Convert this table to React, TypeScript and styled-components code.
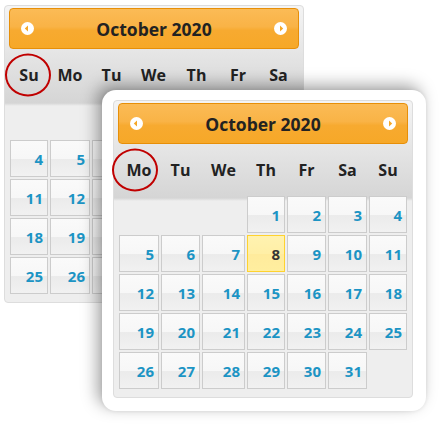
import styled, { createGlobalStyle } from "styled-components";

const GlobalStyle = createGlobalStyle`
  body {
    margin: 0;
    background: #ffffff;
    font-family: "Open Sans", "DejaVu Sans", sans-serif;
  }
`;

type Cell = number | null;

const buildWeeks = (offset: number, days: number): Cell[][] => {
  const cells: Cell[] = [];
  for (let i = 0; i < offset; i++) cells.push(null);
  for (let d = 1; d <= days; d++) cells.push(d);
  while (cells.length % 7 !== 0) cells.push(null);
  const weeks: Cell[][] = [];
  for (let i = 0; i < cells.length; i += 7) weeks.push(cells.slice(i, i + 7));
  return weeks;
};

const NavIcon = ({ dir }: { dir: "prev" | "next" }) => (
  <svg width="13" height="13" viewBox="0 0 13 13">
    <circle cx="6.5" cy="6.5" r="6.5" fill="#ffffff" />
    {dir === "prev" ? (
      <path d="M3.8 6.5 L7 3.6 L7 9.4 Z" fill="#f6a828" />
    ) : (
      <path d="M9.2 6.5 L6 3.6 L6 9.4 Z" fill="#f6a828" />
    )}
  </svg>
);

type DatepickerProps = {
  dayNames: string[];
  offset: number;
  columns: string;
  ringShift: number;
  today: number;
};

const Datepicker = ({ dayNames, offset, columns, ringShift, today }: DatepickerProps) => {
  const weeks = buildWeeks(offset, 31);
  return (
    <Panel>
      <Header>
        <NavIcon dir="prev" />
        <Title>October 2020</Title>
        <NavIcon dir="next" />
      </Header>
      <Grid $columns={columns}>
        {dayNames.map((name, i) => (
          <HeadCell key={name}>
            {name}
            {i === 0 && <Ring $shift={ringShift} />}
          </HeadCell>
        ))}
        {weeks.map((week, w) =>
          week.map((day, d) =>
            day === null ? (
              <EmptyCell key={`${w}-${d}`} />
            ) : (
              <DayCell key={`${w}-${d}`} $today={day === today}>
                {day}
              </DayCell>
            )
          )
        )}
      </Grid>
    </Panel>
  );
};

export default function App() {
  return (
    <>
      <GlobalStyle />
      <Stage>
        <BackSlot>
          <Datepicker
            dayNames={["Su", "Mo", "Tu", "We", "Th", "Fr", "Sa"]}
            offset={4}
            columns="40px 42px 41px 43px 43px 40px 41px"
            ringShift={-1}
            today={8}
          />
        </BackSlot>
        <FrontFrame>
          <Datepicker
            dayNames={["Mo", "Tu", "We", "Th", "Fr", "Sa", "Su"]}
            offset={3}
            columns="42px 41px 45px 40px 41px 41px 40px"
            ringShift={-4}
            today={8}
          />
        </FrontFrame>
      </Stage>
    </>
  );
}

const Stage = styled.div`
  position: relative;
  width: 444px;
  height: 433px;
  overflow: hidden;
  background: #ffffff;
`;

const BackSlot = styled.div`
  padding: 5px 0 0 4px;
`;

const FrontFrame = styled.div`
  position: absolute;
  left: 102px;
  top: 90px;
  padding: 10px 13px 13px 11px;
  background: #ffffff;
  border-radius: 14px;
  box-shadow: -5px -5px 16px rgba(0, 0, 0, 0.35), 0 0 4px rgba(0, 0, 0, 0.08);
`;

const Panel = styled.div`
  width: 300px;
  box-sizing: border-box;
  padding: 2px 4px 7px 4px;
  border: 1px solid #dddddd;
  border-radius: 4px;
  background: linear-gradient(
      to bottom,
      #f4f4f4 0px,
      #e6e6e6 45px,
      #d5d5d5 97px,
      #eeeeee 100px
    )
    no-repeat,
    #eeeeee;
  background-size: 100% 100px, auto;
`;

const Header = styled.div`
  height: 41px;
  box-sizing: border-box;
  display: flex;
  align-items: center;
  padding: 0 11px;
  border: 1px solid #e78f08;
  border-radius: 4px;
  background: linear-gradient(
    to bottom,
    #fbbb56 0%,
    #f9b346 45%,
    #f7aa30 55%,
    #f6a828 100%
  );
`;

const Title = styled.div`
  flex: 1;
  text-align: center;
  font-size: 17.5px;
  font-weight: 700;
  color: #222222;
`;

const Grid = styled.div<{ $columns: string }>`
  display: grid;
  grid-template-columns: ${(p) => p.$columns};
  grid-auto-rows: 39px;
  grid-template-rows: 51px;
`;

const HeadCell = styled.div`
  position: relative;
  display: flex;
  align-items: center;
  justify-content: center;
  font-size: 16px;
  font-weight: 700;
  color: #222222;
`;

const Ring = styled.span<{ $shift: number }>`
  position: absolute;
  left: 50%;
  top: 50%;
  width: 46px;
  height: 43px;
  box-sizing: border-box;
  border: 2px solid #c00000;
  border-radius: 50%;
  transform: translate(calc(-50% + ${(p) => p.$shift}px), -50%);
`;

const EmptyCell = styled.div``;

const DayCell = styled.div<{ $today: boolean }>`
  margin: 1px;
  box-sizing: border-box;
  display: flex;
  align-items: center;
  justify-content: flex-end;
  padding-right: 4px;
  font-size: 15px;
  font-weight: 700;
  border: 1px solid ${(p) => (p.$today ? "#fed22f" : "#cccccc")};
  color: ${(p) => (p.$today ? "#363636" : "#1c94c4")};
  background: ${(p) =>
    p.$today
      ? "linear-gradient(to bottom, #fff2b0 0%, #ffefa6 50%, #ffeb9c 52%, #ffee9f 100%)"
      : "linear-gradient(to bottom, #fafafa 0%, #f7f7f7 50%, #ebebeb 53%, #f1f1f1 100%)"};
`;
